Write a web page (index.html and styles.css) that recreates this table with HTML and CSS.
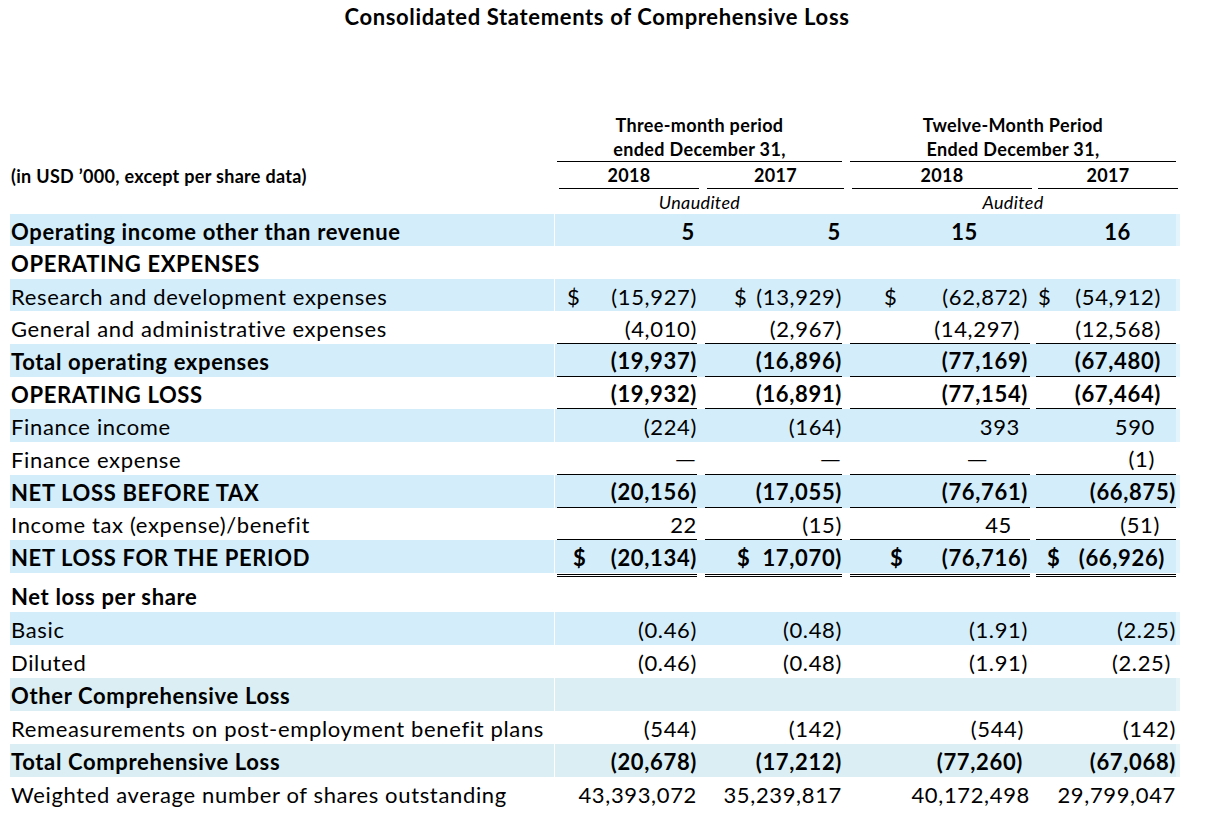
FILE: index.html
```html
<!DOCTYPE html>
<html>
<head>
<meta charset="utf-8">
<link rel="stylesheet" href="styles.css">
</head>
<body>
<div class="page">
  <h1 class="title">Consolidated Statements of Comprehensive Loss</h1>

  <div class="head">
    <div class="hrow h-a">
      <div class="lab"></div>
      <div class="grp g1">Three-month period</div>
      <div class="grp g2">Twelve-Month Period</div>
    </div>
    <div class="hrow h-b">
      <div class="lab"></div>
      <div class="grp g1 ul">ended December 31,</div>
      <div class="grp g2 ul">Ended December 31,</div>
    </div>
    <div class="hrow h-c">
      <div class="lab units">(in USD ’000, except per share data)</div>
      <div class="c c1 yr ul">2018</div>
      <div class="c c2 yr ul">2017</div>
      <div class="c c3 yr ul">2018</div>
      <div class="c c4 yr ul">2017</div>
    </div>
    <div class="hrow h-d">
      <div class="lab"></div>
      <div class="grp g1 note">Unaudited</div>
      <div class="grp g2 note">Audited</div>
    </div>
  </div>

  <div class="sec sec1">
    <div class="row blue bold first">
      <div class="lab">Operating income other than revenue</div>
      <div class="c c1"><span class="v p2">5</span></div>
      <div class="c c2"><span class="v p1">5</span></div>
      <div class="c c3"><span class="v p52">15</span></div>
      <div class="c c4"><span class="v p45">16</span></div>
    </div>
    <div class="row bold">
      <div class="lab">OPERATING EXPENSES</div>
      <div class="c c1"></div><div class="c c2"></div><div class="c c3"></div><div class="c c4"></div>
    </div>
    <div class="row blue">
      <div class="lab">Research and development expenses</div>
      <div class="c c1"><span class="cur l10">$</span><span class="v">(15,927)</span></div>
      <div class="c c2"><span class="cur l29">$</span><span class="v">(13,929)</span></div>
      <div class="c c3"><span class="cur l34">$</span><span class="v p2">(62,872)</span></div>
      <div class="c c4"><span class="cur l2">$</span><span class="v p15">(54,912)</span></div>
    </div>
    <div class="row">
      <div class="lab">General and administrative expenses</div>
      <div class="c c1 ul"><span class="v">(4,010)</span></div>
      <div class="c c2 ul"><span class="v">(2,967)</span></div>
      <div class="c c3 ul"><span class="v p10">(14,297)</span></div>
      <div class="c c4 ul"><span class="v p15">(12,568)</span></div>
    </div>
    <div class="row blue bold">
      <div class="lab">Total operating expenses</div>
      <div class="c c1 ul"><span class="v">(19,937)</span></div>
      <div class="c c2 ul"><span class="v">(16,896)</span></div>
      <div class="c c3 ul"><span class="v p2">(77,169)</span></div>
      <div class="c c4 ul"><span class="v p15">(67,480)</span></div>
    </div>
    <div class="row bold">
      <div class="lab">OPERATING LOSS</div>
      <div class="c c1 ul"><span class="v">(19,932)</span></div>
      <div class="c c2 ul"><span class="v">(16,891)</span></div>
      <div class="c c3 ul"><span class="v p2">(77,154)</span></div>
      <div class="c c4 ul"><span class="v p15">(67,464)</span></div>
    </div>
    <div class="row blue">
      <div class="lab">Finance income</div>
      <div class="c c1"><span class="v">(224)</span></div>
      <div class="c c2"><span class="v">(164)</span></div>
      <div class="c c3"><span class="v p10">393</span></div>
      <div class="c c4"><span class="v p21">590</span></div>
    </div>
    <div class="row">
      <div class="lab">Finance expense</div>
      <div class="c c1 ul"><span class="v dash">—</span></div>
      <div class="c c2 ul"><span class="v dash">—</span></div>
      <div class="c c3 ul"><span class="v dash p33">—</span></div>
      <div class="c c4 ul"><span class="v p21">(1)</span></div>
    </div>
    <div class="row blue bold">
      <div class="lab">NET LOSS BEFORE TAX</div>
      <div class="c c1 ul"><span class="v">(20,156)</span></div>
      <div class="c c2 ul"><span class="v">(17,055)</span></div>
      <div class="c c3 ul"><span class="v p2">(76,761)</span></div>
      <div class="c c4 ul"><span class="v">(66,875)</span></div>
    </div>
    <div class="row">
      <div class="lab">Income tax (expense)/benefit</div>
      <div class="c c1 ul"><span class="v">22</span></div>
      <div class="c c2 ul"><span class="v">(15)</span></div>
      <div class="c c3 ul"><span class="v p18">45</span></div>
      <div class="c c4 ul"><span class="v p16">(51)</span></div>
    </div>
    <div class="row blue bold">
      <div class="lab">NET LOSS FOR THE PERIOD</div>
      <div class="c c1 dbl"><span class="cur l16">$</span><span class="v">(20,134)</span></div>
      <div class="c c2 dbl"><span class="cur l32">$</span><span class="v">17,070)</span></div>
      <div class="c c3 dbl"><span class="cur l40">$</span><span class="v p2">(76,716)</span></div>
      <div class="c c4 dbl"><span class="cur l11">$</span><span class="v p11">(66,926)</span></div>
    </div>
  </div>

  <div class="sec sec2">
    <div class="row bold tall">
      <div class="lab">Net loss per share</div>
    </div>
    <div class="row blue">
      <div class="lab">Basic</div>
      <div class="c c1"><span class="v">(0.46)</span></div>
      <div class="c c2"><span class="v">(0.48)</span></div>
      <div class="c c3"><span class="v p2">(1.91)</span></div>
      <div class="c c4"><span class="v">(2.25)</span></div>
    </div>
    <div class="row">
      <div class="lab">Diluted</div>
      <div class="c c1"><span class="v">(0.46)</span></div>
      <div class="c c2"><span class="v">(0.48)</span></div>
      <div class="c c3"><span class="v p2">(1.91)</span></div>
      <div class="c c4"><span class="v p5">(2.25)</span></div>
    </div>
    <div class="row grey bold">
      <div class="lab">Other Comprehensive Loss</div>
      <div class="c c1"></div><div class="c c2"></div><div class="c c3"></div><div class="c c4"></div>
    </div>
    <div class="row">
      <div class="lab">Remeasurements on post-employment benefit plans</div>
      <div class="c c1"><span class="v">(544)</span></div>
      <div class="c c2"><span class="v">(142)</span></div>
      <div class="c c3"><span class="v p6">(544)</span></div>
      <div class="c c4"><span class="v">(142)</span></div>
    </div>
    <div class="row grey bold">
      <div class="lab">Total Comprehensive Loss</div>
      <div class="c c1"><span class="v">(20,678)</span></div>
      <div class="c c2"><span class="v">(17,212)</span></div>
      <div class="c c3"><span class="v p7">(77,260)</span></div>
      <div class="c c4"><span class="v">(67,068)</span></div>
    </div>
    <div class="row">
      <div class="lab">Weighted average number of shares outstanding</div>
      <div class="c c1"><span class="v">43,393,072</span></div>
      <div class="c c2"><span class="v">35,239,817</span></div>
      <div class="c c3"><span class="v">40,172,498</span></div>
      <div class="c c4"><span class="v">29,799,047</span></div>
    </div>
  </div>
</div>
</body>
</html>
```

FILE: styles.css
```css
* { box-sizing: border-box; }
html, body { margin: 0; padding: 0; background: #fff; }
body {
  font-family: Lato, "Open Sans", sans-serif;
  color: #000;
}
.page {
  width: 1174px;
  margin-left: 10px;
}
.title {
  margin: 0;
  height: 34px;
  line-height: 34px;
  font-size: 22px;
  letter-spacing: 0.65px;
  font-weight: 700;
  text-align: center;
}
.head {
  margin-top: 79px;
  font-size: 18px;
  letter-spacing: 0.35px;
  font-weight: 700;
}
.hrow {
  display: flex;
  align-items: center;
}
.h-a { height: 24px; }
.h-b { height: 25px; }
.h-c { height: 27px; }
.h-d { height: 25px; }
.hrow .lab {
  width: 547px;
  flex: none;
}
.units { font-size: 18px; letter-spacing: 0.3px; padding-left: 1px; }
.grp { flex: none; text-align: center; height: 100%; display: flex; align-items: center; justify-content: center; }
.g1 { width: 285px; }
.g2 { width: 326px; margin-left: 8px; }
.note { font-weight: 400; font-style: italic; }
.yr { justify-content: center; height: 100%; }

.sec { font-size: 22px; letter-spacing: 0.65px; }
.row {
  display: flex;
  width: 1166px;
  height: 32.7px;
  align-items: stretch;
}
.row.first { height: 32px; }
.sec2 .row { height: 33px; }
.sec2 .row.tall { height: 39px; }
.row.tall .lab { padding-top: 9px; }
.row.blue { background: #d3edfa; box-shadow: 4px 0 0 #e4f4fc; }
.row.grey { background: #daeef3; box-shadow: 4px 0 0 #e6f3f7; }
.bold { font-weight: 700; }
.row .lab {
  width: 545px;
  flex: none;
  padding-left: 1px;
  padding-top: 2px;
  display: flex;
  align-items: center;
  border-right: 1px solid #fff;
  white-space: nowrap;
}
.c {
  flex: none;
  display: flex;
  align-items: center;
  padding-top: 2px;
  white-space: nowrap;
}
.hrow .c { padding-top: 0; }
.c1 { width: 140px; margin-left: 2px; }
.c2 { width: 137px; margin-left: 8px; }
.c3 { width: 180px; margin-left: 8px; }
.c4 { width: 140px; margin-left: 6px; }
.ul { border-bottom: 1px solid #000; }
.dbl { border-bottom: 3px double #000; }
.row .c.dbl { height: calc(100% + 4px); padding-bottom: 1px; }
.v { margin-left: auto; }
.dash { transform: scaleX(1.25); transform-origin: right center; }
.cur { flex: none; }
.p1 { padding-right: 1px; }
.p2 { padding-right: 2px; }
.p5 { padding-right: 5px; }
.p6 { padding-right: 6px; }
.p7 { padding-right: 7px; }
.p10 { padding-right: 10px; }
.p11 { padding-right: 11px; }
.p15 { padding-right: 15px; }
.p16 { padding-right: 16px; }
.p18 { padding-right: 18px; }
.p21 { padding-right: 21px; }
.p33 { padding-right: 33px; }
.p45 { padding-right: 45px; }
.p52 { padding-right: 52px; }
.l2 { padding-left: 2px; }
.l10 { padding-left: 10px; }
.l11 { padding-left: 11px; }
.l16 { padding-left: 16px; }
.l29 { padding-left: 29px; }
.l32 { padding-left: 32px; }
.l34 { padding-left: 34px; }
.l40 { padding-left: 40px; }
```
